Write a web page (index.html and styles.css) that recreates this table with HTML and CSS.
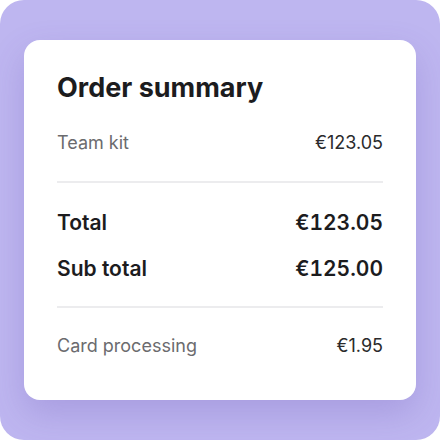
FILE: index.html
```html
<!DOCTYPE html>
<html>
<head>
<meta charset="utf-8">
<link rel="stylesheet" href="styles.css">
</head>
<body>
<div class="frame">
  <div class="card">
    <h1 class="title">Order summary</h1>
    <div class="row item first"><span>Team kit</span><span class="amt">€123.05</span></div>
    <hr class="divider">
    <div class="row strong total"><span>Total</span><span class="num">€123.05</span></div>
    <div class="row strong sub"><span>Sub total</span><span class="num">€125.00</span></div>
    <hr class="divider second">
    <div class="row item last"><span>Card processing</span><span class="amt">€1.95</span></div>
  </div>
</div>
</body>
</html>
```
FILE: styles.css
```css
html, body {
  margin: 0;
  padding: 0;
  background: #ffffff;
}
body {
  width: 440px;
  height: 440px;
  font-family: Inter, "Noto Sans", sans-serif;
}
.frame {
  width: 440px;
  height: 440px;
  box-sizing: border-box;
  background: #beb6f0;
  border-radius: 24px;
  padding: 40px 24px;
}
.card {
  background: #ffffff;
  border-radius: 16px;
  height: 360px;
  box-sizing: border-box;
  padding: 32px 33px;
  display: flex;
  flex-direction: column;
  box-shadow: 0 14px 34px rgba(90, 70, 170, 0.22);
}
.title {
  margin: 0;
  font-size: 27px;
  line-height: 32px;
  font-weight: 700;
  color: #1c1c1e;
}
.row {
  display: flex;
  justify-content: space-between;
  align-items: center;
}
.num {
  font-variant-numeric: tabular-nums;
}
.item {
  font-size: 18px;
  line-height: 24px;
  color: #6b6b6e;
}
.item .amt {
  color: #2a2a2c;
}
.first {
  margin-top: 27px;
}
.divider {
  border: 0;
  height: 2px;
  background: #ececee;
  margin: 26px 0 0 0;
}
.strong {
  font-size: 21px;
  line-height: 28px;
  font-weight: 600;
  color: #1c1c1e;
}
.total {
  margin-top: 26px;
}
.sub {
  margin-top: 18px;
}
.divider.second {
  margin-top: 23px;
}
.last {
  margin-top: 26px;
}
```
